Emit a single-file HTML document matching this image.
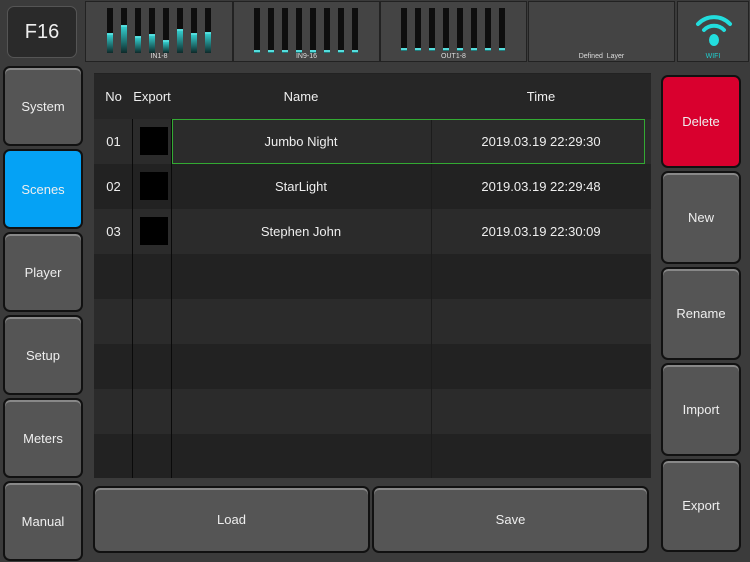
<html><head><style>
body{margin:0;width:750px;height:562px;background:#3b3b3b;font-family:"Liberation Sans",sans-serif;position:relative;overflow:hidden;color:#eee}
div{box-sizing:border-box}
.a{position:absolute}
.pn{position:absolute;top:1px;height:61px;background:#444;border:1px solid #222}
.lb{position:absolute;bottom:1px;width:100%;text-align:center;font-size:7px;color:#ddd}
.bar{position:absolute;width:6px;top:6px;height:45px;background:#0e0e0e}
.bar i{position:absolute;left:0;width:6px;bottom:0;background:linear-gradient(#3cc,#0e2a2a);border-top:2px solid #5dd}
.btn{position:absolute;border-radius:7px;background:#555;border:2px solid #111;box-shadow:inset 0 2px 0 #888;display:flex;align-items:center;justify-content:center;font-size:13px;color:#eee}
.row{position:absolute;left:94px;width:557px;height:45px;font-size:13px}
.row span{position:absolute;top:0;line-height:45px;text-align:center}
.sq{position:absolute;left:140px;width:28px;height:28px;background:#000;top:8px}
</style></head><body>
<div class="a" style="left:7px;top:6px;width:70px;height:52px;background:#2a2a2a;border-radius:7px;border:1px solid #555;font-size:20px;display:flex;align-items:center;justify-content:center">F16</div>
<div class="pn" style="left:85px;width:148px">
<div class="bar" style="left:21px"><i style="height:18px"></i></div>
<div class="bar" style="left:35px"><i style="height:26px"></i></div>
<div class="bar" style="left:49px"><i style="height:15px"></i></div>
<div class="bar" style="left:63px"><i style="height:17px"></i></div>
<div class="bar" style="left:77px"><i style="height:11px"></i></div>
<div class="bar" style="left:91px"><i style="height:22px"></i></div>
<div class="bar" style="left:105px"><i style="height:18px"></i></div>
<div class="bar" style="left:119px"><i style="height:19px"></i></div>
<div class="lb">IN1-8</div></div>
<div class="pn" style="left:233px;width:147px">
<div class="bar" style="left:20px"><i style="height:1px"></i></div><div class="bar" style="left:34px"><i style="height:1px"></i></div><div class="bar" style="left:48px"><i style="height:1px"></i></div><div class="bar" style="left:62px"><i style="height:1px"></i></div><div class="bar" style="left:76px"><i style="height:1px"></i></div><div class="bar" style="left:90px"><i style="height:1px"></i></div><div class="bar" style="left:104px"><i style="height:1px"></i></div><div class="bar" style="left:118px"><i style="height:1px"></i></div>
<div class="lb">IN9-16</div></div>
<div class="pn" style="left:380px;width:147px">
<div class="bar" style="left:20px;height:43px"><i style="height:1px"></i></div><div class="bar" style="left:34px;height:43px"><i style="height:1px"></i></div><div class="bar" style="left:48px;height:43px"><i style="height:1px"></i></div><div class="bar" style="left:62px;height:43px"><i style="height:1px"></i></div><div class="bar" style="left:76px;height:43px"><i style="height:1px"></i></div><div class="bar" style="left:90px;height:43px"><i style="height:1px"></i></div><div class="bar" style="left:104px;height:43px"><i style="height:1px"></i></div><div class="bar" style="left:118px;height:43px"><i style="height:1px"></i></div>
<div class="lb">OUT1-8</div></div>
<div class="pn" style="left:528px;width:147px"><div class="lb">Defined&nbsp;&nbsp;Layer</div></div>
<div class="pn" style="left:677px;width:72px">
<svg class="a" style="left:17px;top:9px" width="38" height="36" viewBox="0 0 38 36"><g fill="none" stroke="#2dd" stroke-width="4" stroke-linecap="round"><path d="M3 13 A22 22 0 0 1 35 13"/><path d="M9 19 A14 14 0 0 1 29 19"/></g><ellipse cx="19" cy="29" rx="5" ry="6" fill="#2dd"/></svg>
<div class="lb" style="color:#2cc">WIFI</div></div>

<div class="btn" style="left:3px;top:66px;width:80px;height:80px">System</div>
<div class="btn" style="left:3px;top:149px;width:80px;height:80px;background:#05a2f5;box-shadow:none">Scenes</div>
<div class="btn" style="left:3px;top:232px;width:80px;height:80px">Player</div>
<div class="btn" style="left:3px;top:315px;width:80px;height:80px">Setup</div>
<div class="btn" style="left:3px;top:398px;width:80px;height:80px">Meters</div>
<div class="btn" style="left:3px;top:481px;width:80px;height:80px">Manual</div>

<div class="a" style="left:94px;top:73px;width:557px;height:405px;background:#222"></div>
<div class="row" style="top:74px;background:#262626"><span style="left:0;width:39px">No</span><span style="left:39px;width:38px">Export</span><span style="left:77px;width:260px">Name</span><span style="left:337px;width:220px">Time</span></div>
<div class="row" style="top:119px;background:#2b2b2b"><span style="left:0;width:39px">01</span><span style="left:77px;width:260px">Jumbo Night</span><span style="left:337px;width:220px">2019.03.19 22:29:30</span><div class="sq" style="left:46px"></div></div>
<div class="row" style="top:164px;background:#222"><span style="left:0;width:39px">02</span><span style="left:77px;width:260px">StarLight</span><span style="left:337px;width:220px">2019.03.19 22:29:48</span><div class="sq" style="left:46px"></div></div>
<div class="row" style="top:209px;background:#2b2b2b"><span style="left:0;width:39px">03</span><span style="left:77px;width:260px">Stephen John</span><span style="left:337px;width:220px">2019.03.19 22:30:09</span><div class="sq" style="left:46px"></div></div>
<div class="row" style="top:254px;background:#222"></div>
<div class="row" style="top:299px;background:#2b2b2b"></div>
<div class="row" style="top:344px;background:#222"></div>
<div class="row" style="top:389px;background:#2b2b2b"></div>
<div class="row" style="top:434px;background:#222;height:44px"></div>
<div class="a" style="left:132px;top:119px;width:1px;height:359px;background:#0a0a0a"></div>
<div class="a" style="left:171px;top:119px;width:1px;height:359px;background:#0a0a0a"></div>
<div class="a" style="left:431px;top:119px;width:1px;height:359px;background:#1c1c1c"></div>
<div class="a" style="left:172px;top:119px;width:473px;height:45px;border:1px solid #3a3;"></div>

<div class="btn" style="left:661px;top:75px;width:80px;height:93px;background:#d9002e;box-shadow:none">Delete</div>
<div class="btn" style="left:661px;top:171px;width:80px;height:93px">New</div>
<div class="btn" style="left:661px;top:267px;width:80px;height:93px">Rename</div>
<div class="btn" style="left:661px;top:363px;width:80px;height:93px">Import</div>
<div class="btn" style="left:661px;top:459px;width:80px;height:93px">Export</div>

<div class="btn" style="left:93px;top:486px;width:277px;height:67px">Load</div>
<div class="btn" style="left:372px;top:486px;width:277px;height:67px">Save</div>
</body></html>
